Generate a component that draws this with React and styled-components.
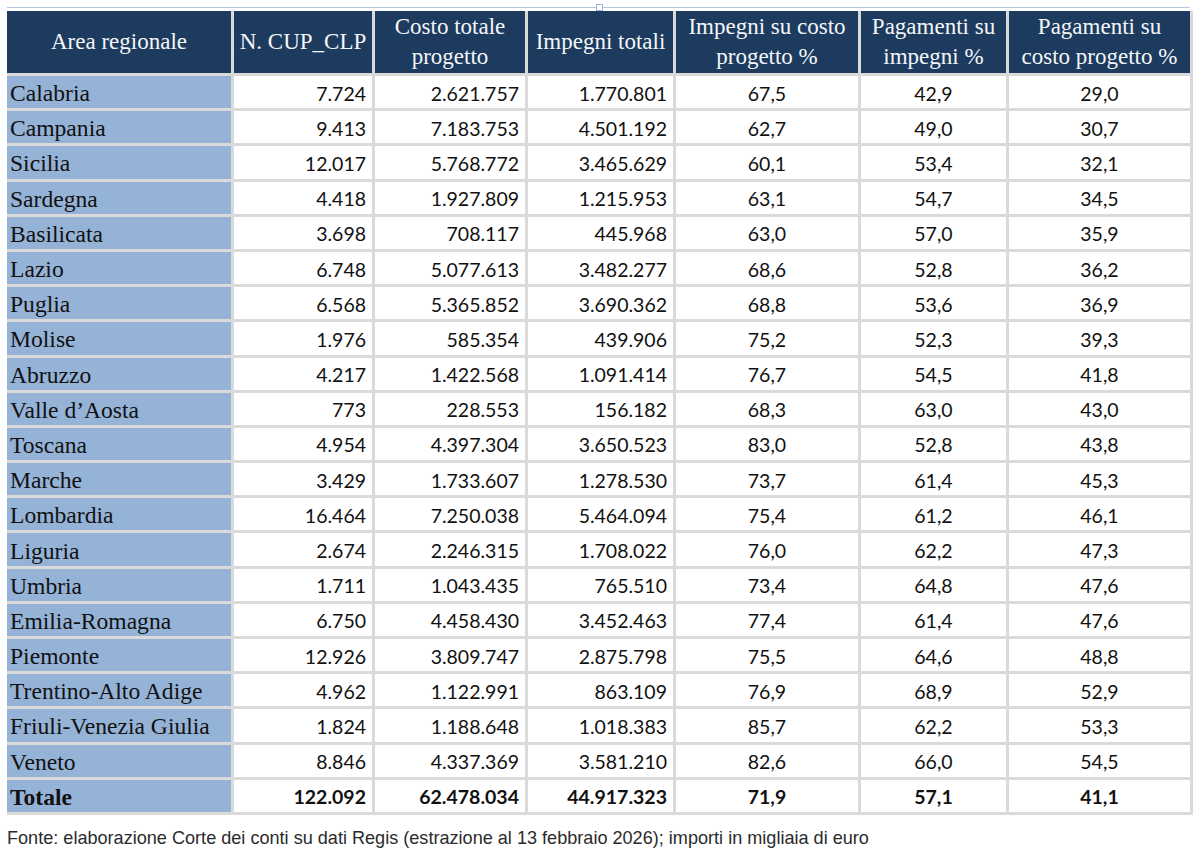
import styled, { createGlobalStyle } from "styled-components";

const GlobalStyle = createGlobalStyle`
    body {
        margin: 0;
        background: #ffffff;
    }
`;

const Page = styled.div`
    width: 1200px;
    height: 853px;
    padding: 7px 0 0 7px;
    box-sizing: border-box;
    background: #ffffff;
`;

const Rule = styled.div`
    position: relative;
    width: 1183px;
    height: 1px;
    background: #b3c6e3;
    margin-bottom: 3px;
`;

const Handle = styled.span`
    position: absolute;
    left: 589px;
    top: -3px;
    width: 5px;
    height: 5px;
    border: 1px solid #9db6dc;
    background: #ffffff;
`;

const Grid = styled.div`
    display: grid;
    grid-template-columns: 224px 138px 150px 145px 182px 145px 181px;
    grid-template-rows: 62px repeat(21, 32.2px);
    gap: 3px;
    width: max-content;
    padding: 0 3px 3px 0;
    background: #dadada;
`;

const HeadCell = styled.div`
    display: flex;
    align-items: center;
    justify-content: center;
    text-align: center;
    background: #1c3b5e;
    color: #f4f6f9;
    font-family: "Liberation Serif", "DejaVu Serif", serif;
    font-size: 23px;
    line-height: 30px;
    padding: 0 2px;
`;

const RegionCell = styled.div`
    display: flex;
    align-items: center;
    padding: 3px 0 0 3px;
    background: #95b3d7;
    color: #111;
    font-family: "Liberation Serif", "DejaVu Serif", serif;
    font-size: 23.6px;
    font-weight: ${(p) => (p.$bold ? 700 : 400)};
`;

const NumCell = styled.div`
    display: flex;
    align-items: center;
    justify-content: ${(p) => (p.$center ? "center" : "flex-end")};
    padding: 2px ${(p) => (p.$center ? "0" : "6px")} 0 0;
    background: #ffffff;
    color: #111;
    font-family: Lato, "Open Sans", sans-serif;
    font-size: 19.5px;
    font-weight: ${(p) => (p.$bold ? 700 : 400)};
`;

const Footnote = styled.p`
    margin: 13px 0 0 0;
    font-family: "Liberation Sans", Arial, sans-serif;
    font-size: 18.1px;
    color: #2b2b2b;
`;

const headers = [
    "Area regionale",
    "N. CUP_CLP",
    "Costo totale progetto",
    "Impegni totali",
    "Impegni su costo progetto %",
    "Pagamenti su impegni %",
    "Pagamenti su costo progetto %",
];

const rows = [
    ["Calabria", "7.724", "2.621.757", "1.770.801", "67,5", "42,9", "29,0"],
    ["Campania", "9.413", "7.183.753", "4.501.192", "62,7", "49,0", "30,7"],
    ["Sicilia", "12.017", "5.768.772", "3.465.629", "60,1", "53,4", "32,1"],
    ["Sardegna", "4.418", "1.927.809", "1.215.953", "63,1", "54,7", "34,5"],
    ["Basilicata", "3.698", "708.117", "445.968", "63,0", "57,0", "35,9"],
    ["Lazio", "6.748", "5.077.613", "3.482.277", "68,6", "52,8", "36,2"],
    ["Puglia", "6.568", "5.365.852", "3.690.362", "68,8", "53,6", "36,9"],
    ["Molise", "1.976", "585.354", "439.906", "75,2", "52,3", "39,3"],
    ["Abruzzo", "4.217", "1.422.568", "1.091.414", "76,7", "54,5", "41,8"],
    ["Valle d\u2019Aosta", "773", "228.553", "156.182", "68,3", "63,0", "43,0"],
    ["Toscana", "4.954", "4.397.304", "3.650.523", "83,0", "52,8", "43,8"],
    ["Marche", "3.429", "1.733.607", "1.278.530", "73,7", "61,4", "45,3"],
    ["Lombardia", "16.464", "7.250.038", "5.464.094", "75,4", "61,2", "46,1"],
    ["Liguria", "2.674", "2.246.315", "1.708.022", "76,0", "62,2", "47,3"],
    ["Umbria", "1.711", "1.043.435", "765.510", "73,4", "64,8", "47,6"],
    ["Emilia-Romagna", "6.750", "4.458.430", "3.452.463", "77,4", "61,4", "47,6"],
    ["Piemonte", "12.926", "3.809.747", "2.875.798", "75,5", "64,6", "48,8"],
    ["Trentino-Alto Adige", "4.962", "1.122.991", "863.109", "76,9", "68,9", "52,9"],
    ["Friuli-Venezia Giulia", "1.824", "1.188.648", "1.018.383", "85,7", "62,2", "53,3"],
    ["Veneto", "8.846", "4.337.369", "3.581.210", "82,6", "66,0", "54,5"],
];

const total = ["Totale", "122.092", "62.478.034", "44.917.323", "71,9", "57,1", "41,1"];

function Row({ data, bold }) {
    return (
        <>
            <RegionCell $bold={bold}>{data[0]}</RegionCell>
            {data.slice(1).map((v, i) => (
                <NumCell key={i} $center={i >= 3} $bold={bold}>
                    {v}
                </NumCell>
            ))}
        </>
    );
}

export default function App() {
    return (
        <Page>
            <GlobalStyle />
            <Rule>
                <Handle />
            </Rule>
            <Grid>
                {headers.map((h) => (
                    <HeadCell key={h}>{h}</HeadCell>
                ))}
                {rows.map((r) => (
                    <Row key={r[0]} data={r} />
                ))}
                <Row data={total} bold />
            </Grid>
            <Footnote>
                Fonte: elaborazione Corte dei conti su dati Regis (estrazione al 13 febbraio 2026); importi in migliaia di euro
            </Footnote>
        </Page>
    );
}
